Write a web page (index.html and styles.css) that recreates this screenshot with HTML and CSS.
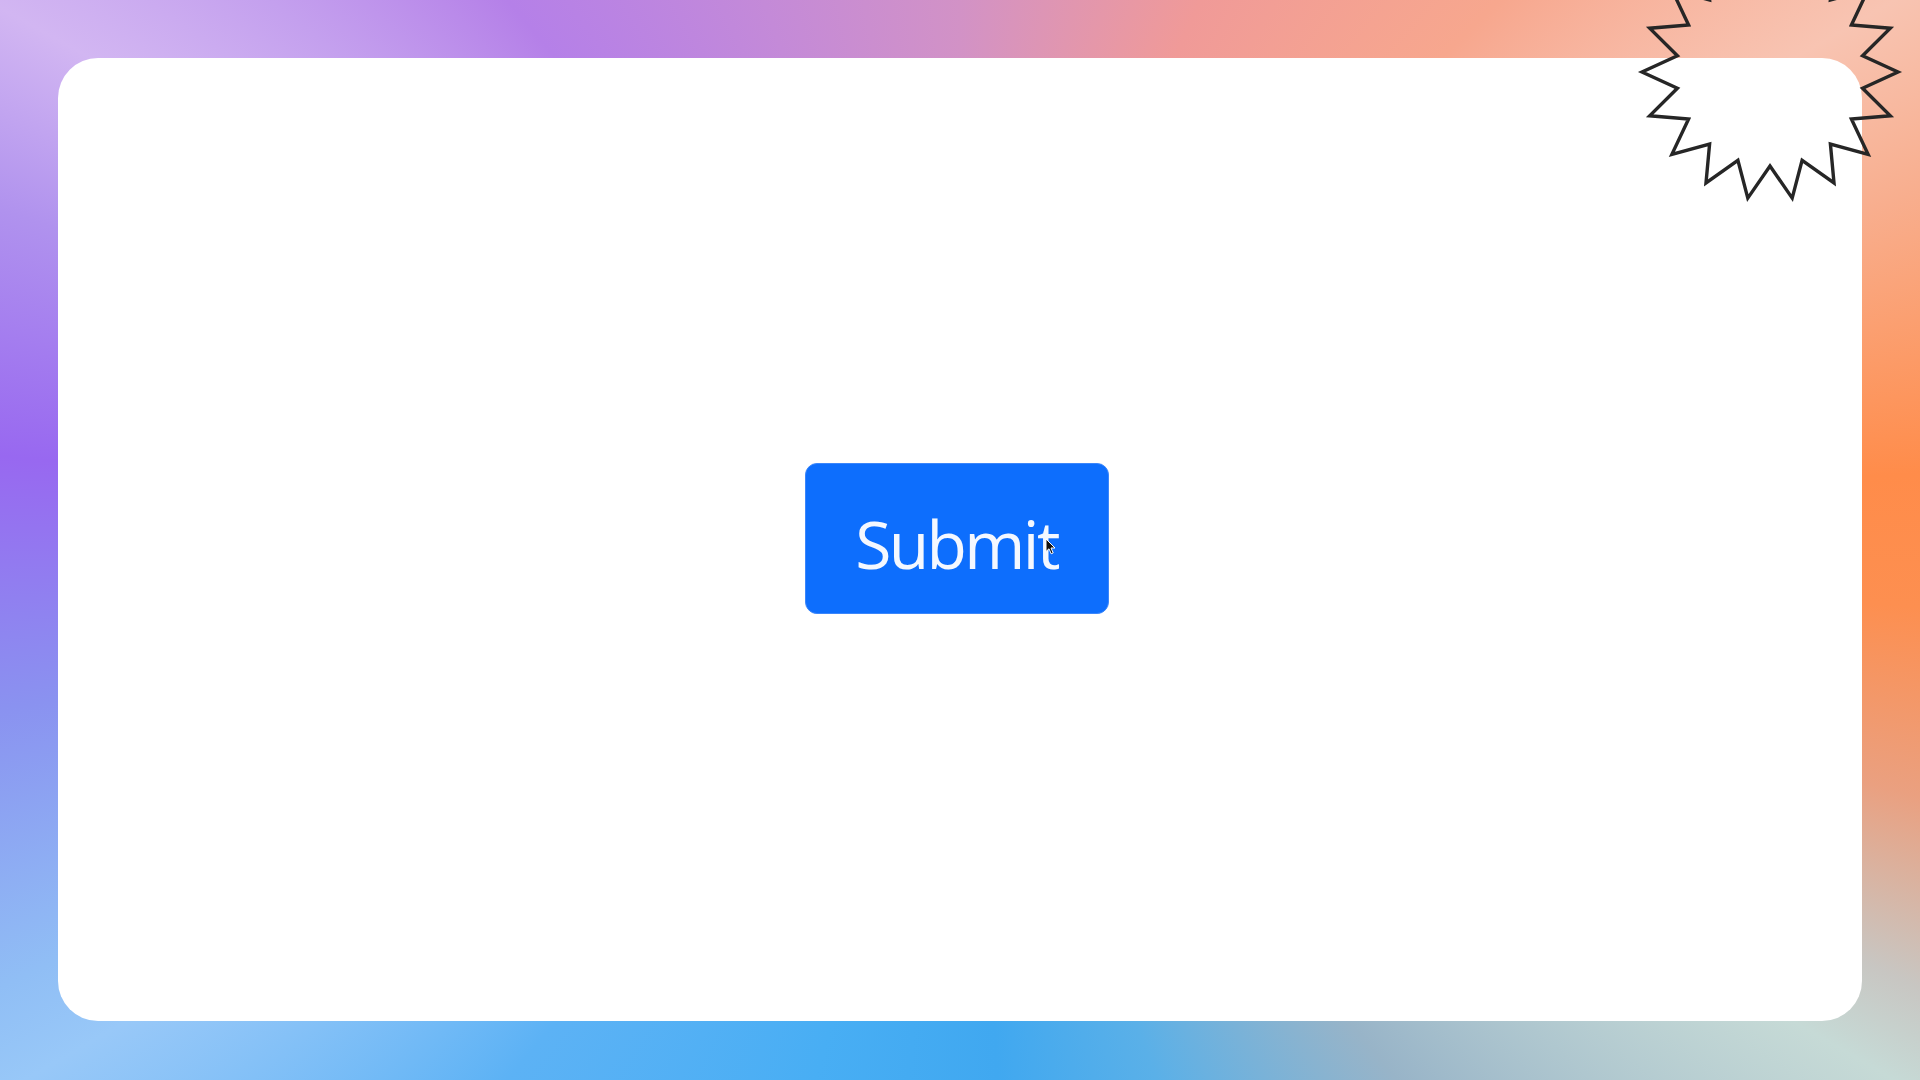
FILE: index.html
```html
<!DOCTYPE html>
<html lang="en">
<head>
<meta charset="utf-8">
<title>Submit</title>
<link rel="stylesheet" href="styles.css">
</head>
<body>
<main class="stage">
  <section class="card">
    <button class="submit" type="button">Submit
      <svg class="cursor" viewBox="0 0 11 17" width="11" height="17" aria-hidden="true">
        <path d="M1 1 L1 13.5 L4 10.8 L6.2 15.8 L8.2 14.9 L6 10 L10 10 Z" fill="#111" stroke="#fff" stroke-width="1"/>
      </svg>
    </button>
  </section>
</main>
<svg class="burst" viewBox="-140 -140 280 280" width="280" height="280" aria-hidden="true">
  <polygon fill="none" stroke="#262626" stroke-width="3.4" stroke-linejoin="miter" points="0,94 22.2,126.1 32.1,88.3 64,110.9 60.4,72 98.1,82.3 81.4,47 120.3,43.8 92.6,16.3 128,0 92.6,-16.3 120.3,-43.8 81.4,-47 98.1,-82.3 60.4,-72 64,-110.9 32.1,-88.3 22.2,-126.1 0,-94 -22.2,-126.1 -32.1,-88.3 -64,-110.9 -60.4,-72 -98.1,-82.3 -81.4,-47 -120.3,-43.8 -92.6,-16.3 -128,0 -92.6,16.3 -120.3,43.8 -81.4,47 -98.1,82.3 -60.4,72 -64,110.9 -32.1,88.3 -22.2,126.1"/>
</svg>
</body>
</html>
```
FILE: styles.css
```css
html, body {
  margin: 0;
  height: 100%;
}
body {
  position: relative;
  overflow: hidden;
  background: conic-gradient(from 0deg at 960px 540px,
    #d292c6 0deg,
    #f09a98 24deg,
    #f7a78e 45deg,
    #f8c4b2 60deg,
    #f8ae8e 70deg,
    #ff8c4a 86deg,
    #fd8f50 94deg,
    #eaa080 105deg,
    #c8c6c2 115deg,
    #c6dad6 120deg,
    #98b4c8 141deg,
    #5ab0e8 160deg,
    #40a8f0 176deg,
    #48aef4 195deg,
    #5cb2f5 220deg,
    #98c8f8 240deg,
    #90bef5 245deg,
    #8a92f0 260deg,
    #9868f0 275deg,
    #b092ee 289deg,
    #d2b6f2 299deg,
    #c4a0ee 308deg,
    #b580e8 320deg,
    #c48ad8 340deg,
    #d292c6 360deg);
  font-family: "Open Sans", "Noto Sans", "Liberation Sans", sans-serif;
}
.stage {
  box-sizing: border-box;
  height: 100%;
  padding: 58px 58px 59px 58px;
  display: flex;
}
.card {
  flex: 1;
  background: #ffffff;
  border-radius: 40px;
  display: flex;
  align-items: center;
  justify-content: center;
}
.submit {
  position: relative;
  width: 304px;
  height: 151px;
  margin: 0 7px 2px 0;
  border: 1px solid #3b86fb;
  border-radius: 12px;
  background: #0d6efd;
  color: #f4f8ff;
  font-family: "Open Sans", "Noto Sans", "Liberation Sans", sans-serif;
  font-weight: 500;
  font-size: 66px;
  letter-spacing: -2.6px;
  line-height: 1;
  padding: 8px 0 0 0;
  cursor: default;
}
.cursor {
  position: absolute;
  left: 239px;
  top: 74px;
}
.burst {
  position: absolute;
  left: 1630px;
  top: -68px;
}
```
